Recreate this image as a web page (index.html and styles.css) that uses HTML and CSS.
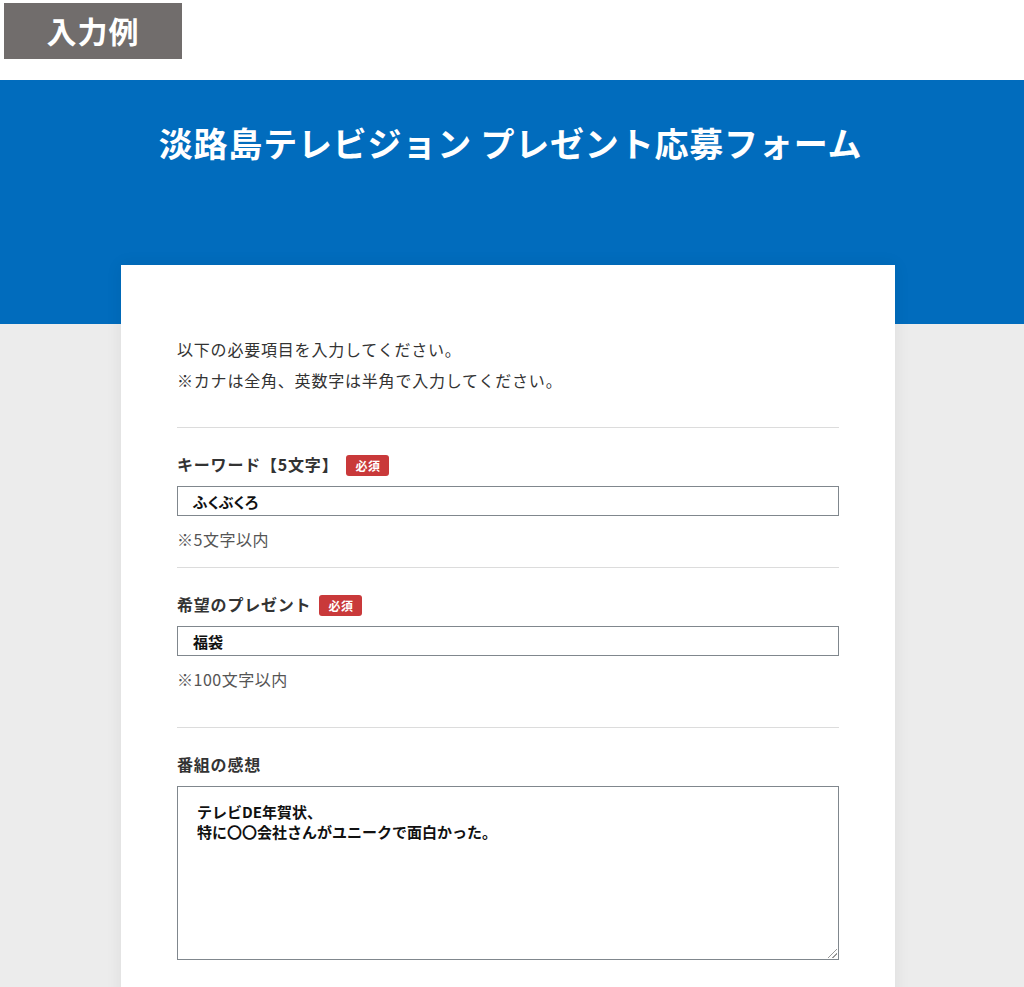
FILE: index.html
```html
<!DOCTYPE html>
<html lang="ja">
<head>
<meta charset="utf-8">
<title>淡路島テレビジョン プレゼント応募フォーム</title>
<link rel="stylesheet" href="styles.css">
</head>
<body>
<div class="top">
  <div class="tag">入力例</div>
</div>
<header class="hero">
  <h1 class="title">淡路島テレビジョン プレゼント応募フォーム</h1>
</header>
<main class="main">
  <div class="card">
    <div class="intro">
      <p>以下の必要項目を入力してください。</p>
      <p>※カナは全角、英数字は半角で入力してください。</p>
    </div>
    <section class="field field-1">
      <div class="label-row"><span class="label">キーワード【5文字】</span><span class="badge">必須</span></div>
      <div class="input">ふくぶくろ</div>
      <p class="note">※5文字以内</p>
    </section>
    <section class="field field-2">
      <div class="label-row"><span class="label">希望のプレゼント</span><span class="badge">必須</span></div>
      <div class="input">福袋</div>
      <p class="note">※100文字以内</p>
    </section>
    <section class="field field-3">
      <div class="label-row"><span class="label">番組の感想</span></div>
      <div class="textarea">テレビDE年賀状、<br>特に〇〇会社さんがユニークで面白かった。<span class="grip"></span></div>
    </section>
  </div>
</main>
</body>
</html>
```

FILE: styles.css
```css
* { box-sizing: border-box; }
html, body { margin: 0; padding: 0; }
body {
  font-family: "Noto Sans CJK JP", "Noto Sans", sans-serif;
  background: #ececec;
  height: 987px;
  overflow: hidden;
  color: #333;
}
.top {
  background: #fff;
  height: 80px;
  padding: 3px 0 0 4px;
}
.tag {
  width: 178px;
  height: 56px;
  background: #716d6c;
  color: #fff;
  font-weight: 700;
  font-size: 30px;
  display: flex;
  align-items: center;
  justify-content: center;
  letter-spacing: 1px;
  padding-bottom: 2px;
}
.hero {
  background: #016cbd;
  height: 244px;
  padding-top: 39px;
}
.title {
  margin: 0;
  color: #fff;
  font-size: 34px;
  font-weight: 700;
  line-height: 48px;
  text-align: center;
  letter-spacing: 0.8px;
  padding-right: 3px;
}
.main {
  position: relative;
}
.card {
  width: 774px;
  margin: -59px 0 0 121px;
  background: #fff;
  min-height: 740px;
  padding: 69px 56px 0;
  box-shadow: 0 0 16px rgba(0, 0, 0, 0.07);
}
.intro {
  padding-bottom: 31px;
}
.intro p {
  margin: 0;
  font-size: 16px;
  line-height: 31px;
  letter-spacing: 0.8px;
  color: #333;
}
.field {
  border-top: 1px solid #dcdcdc;
  padding-top: 24px;
}
.field-1 { padding-bottom: 17px; }
.field-2 { padding-bottom: 37px; }
.label-row {
  display: flex;
  align-items: center;
  height: 24px;
}
.label {
  font-size: 16px;
  font-weight: 700;
  letter-spacing: 0.8px;
  color: #333;
}
.badge {
  margin-left: 8px;
  margin-top: 3px;
  background: #c9393a;
  color: #fff;
  font-size: 12px;
  font-weight: 700;
  height: 21px;
  width: 43px;
  border-radius: 3px;
  display: flex;
  align-items: center;
  justify-content: center;
  letter-spacing: 0.5px;
}
.input {
  margin-top: 10px;
  height: 30px;
  border: 1px solid #80878d;
  padding: 0 15px;
  font-size: 15px;
  font-weight: 700;
  color: #111;
  display: flex;
  align-items: center;
  font-feature-settings: "palt";
}
.note {
  margin: 12px 0 0;
  font-size: 16px;
  line-height: 22px;
  color: #555;
  letter-spacing: 0.5px;
}
.textarea {
  position: relative;
  margin-top: 10px;
  height: 174px;
  border: 1px solid #80878d;
  padding: 15px 19px;
  font-size: 15px;
  font-weight: 700;
  line-height: 20px;
  color: #111;
}
.grip {
  position: absolute;
  right: 1px;
  bottom: 1px;
  width: 9px;
  height: 9px;
  background:
    linear-gradient(135deg, transparent 45%, #999 45%, #999 55%, transparent 55%, transparent 70%, #999 70%, #999 80%, transparent 80%);
}
```
